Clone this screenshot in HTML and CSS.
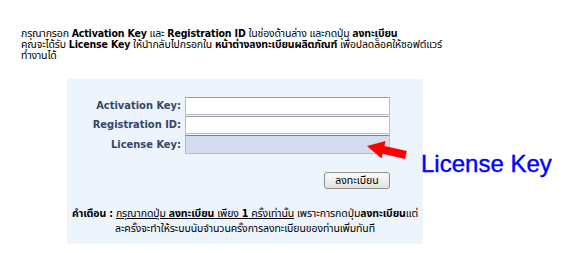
FILE: index.html
```html
<!DOCTYPE html>
<html lang="th">
<head>
<meta charset="utf-8">
<link rel="stylesheet" href="styles.css">
</head>
<body>
<div class="page">
  <p class="intro">กรุณากรอก <b>Activation Key</b> และ <b>Registration ID</b> ในช่องด้านล่าง และกดปุ่ม <b>ลงทะเบียน</b><br>คุณจะได้รับ <b>License Key</b> ให้นำกลับไปกรอกใน <b>หน้าต่างลงทะเบียนผลิตภัณฑ์</b> เพื่อปลดล็อคให้ซอฟต์แวร์<br>ทำงานได้</p>
  <div class="panel">
    <div class="form">
      <label class="lbl">Activation Key:</label><div class="field"></div>
      <label class="lbl">Registration ID:</label><div class="field"></div>
      <label class="lbl">License Key:</label><div class="field field-license"></div>
    </div>
    <div class="actions"><button class="btn" type="button">ลงทะเบียน</button></div>
    <p class="warn"><b>คำเตือน :</b> <u>กรุณากดปุ่ม <b>ลงทะเบียน</b> เพียง <b>1</b> ครั้งเท่านั้น</u> เพราะการกดปุ่ม<b>ลงทะเบียน</b>แต่<br>ละครั้งจะทำให้ระบบนับจำนวนครั้งการลงทะเบียนของท่านเพิ่มทันที</p>
  </div>
  <svg class="arrow" width="60" height="30" viewBox="0 0 60 30"><polygon points="0,0 17,-9 17,-4 40,-4 40,4 17,4 17,9" fill="#ff0000" transform="translate(7,11) rotate(13)"/></svg>
  <div class="callout">License Key</div>
</div>
</body>
</html>
```
FILE: styles.css
```css
html, body { margin: 0; padding: 0; background: #ffffff; }
body { font-family: Tahoma, "DejaVu Sans Condensed", "Noto Sans Thai", Loma, sans-serif; font-size: 10.5px; color: #000; }
.page { position: relative; width: 570px; height: 253px; padding: 28px 0 0 21px; box-sizing: border-box; }
.intro { margin: 0; line-height: 11px; white-space: nowrap; letter-spacing: -0.15px; }
.panel { margin: 18px 0 0 46px; width: 356px; height: 165px; box-sizing: border-box; background: #eef4fb; padding-top: 18px; }
.form { display: grid; grid-template-columns: 114px 205px; column-gap: 4px; row-gap: 1px; align-items: center; }
.lbl { text-align: right; font-weight: bold; font-size: 11px; line-height: 14px; color: #36456a; }
.field { height: 16px; background: #fff; border: 1px solid #b9bcc2; border-top-color: #9a9da3; }
.field-license { height: 17px; background: #d6dcef; border-color: #b9bcc6; border-top-color: #808389; }
.actions { display: flex; justify-content: flex-end; padding: 18px 33px 0 0; }
.btn { width: 66px; height: 17px; padding: 0; font-family: inherit; font-size: 10.5px; line-height: 15px; color: #000; background: linear-gradient(#fbfbfb, #e2e2e2); border: 1px solid #8f8f8f; border-radius: 3px; }
.warn { margin: 17px 0 0 0; text-align: center; line-height: 15px; white-space: nowrap; letter-spacing: -0.1px; }
.arrow { position: absolute; left: 360px; top: 135px; overflow: visible; }
.callout { position: absolute; left: 421px; top: 150px; font-family: "Liberation Sans", Arial, sans-serif; font-size: 24px; color: #0000ff; -webkit-text-stroke: 0.4px #0000ff; }
```
